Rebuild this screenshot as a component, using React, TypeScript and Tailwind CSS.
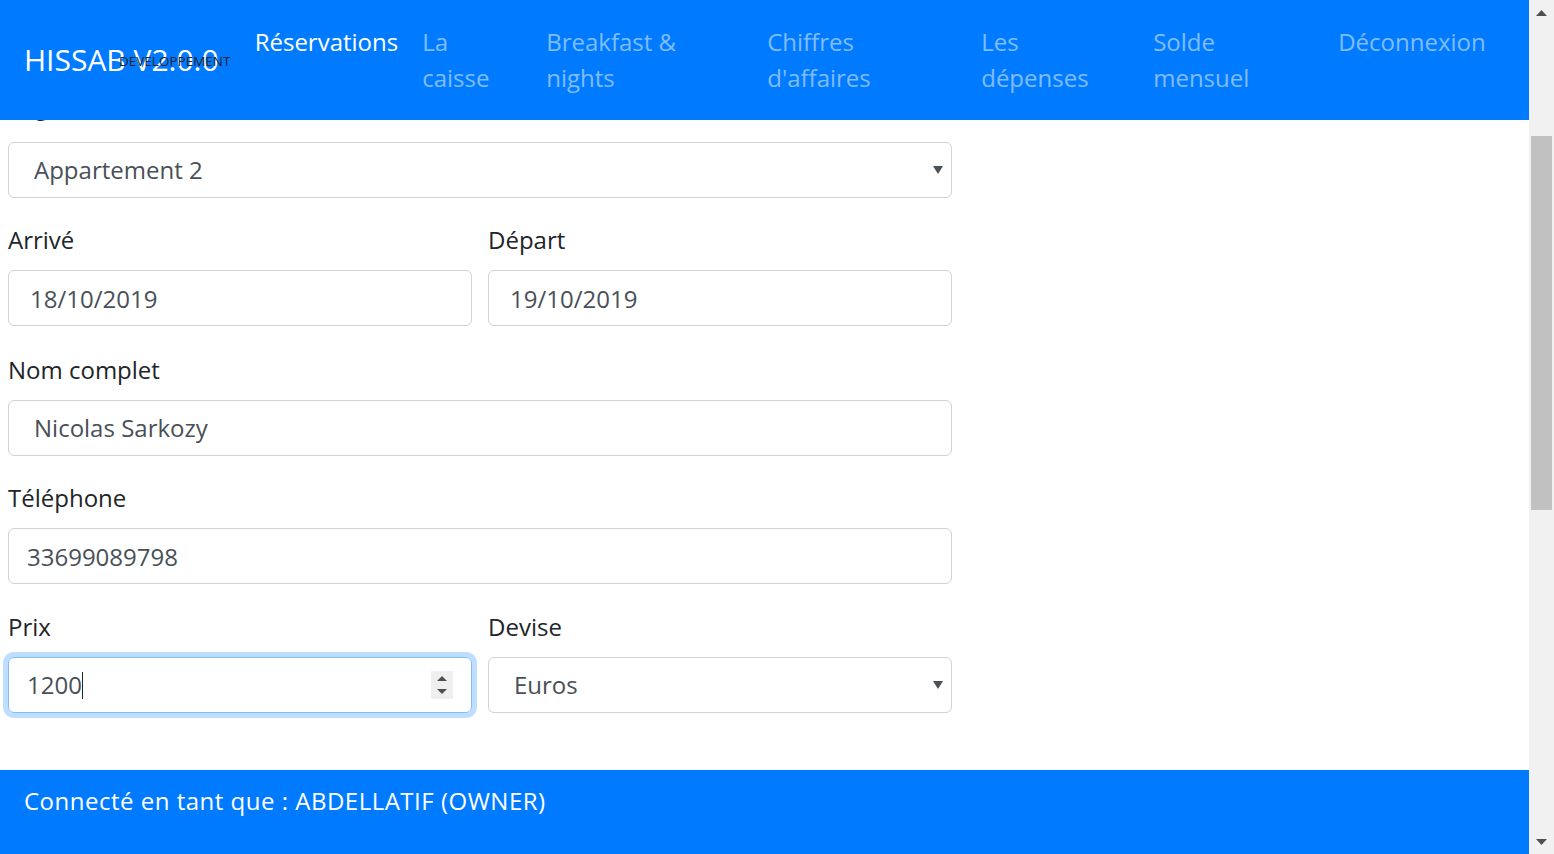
import React from 'react';

const navItems = [
  { label: ['Réservations'], width: '', active: true },
  { label: ['La', 'caisse'], width: 'w-[100px]' },
  { label: ['Breakfast &', 'nights'], width: 'w-[197px]' },
  { label: ['Chiffres', "d'affaires"], width: 'w-[190px]' },
  { label: ['Les', 'dépenses'], width: 'w-[148px]' },
  { label: ['Solde', 'mensuel'], width: 'w-[161px]' },
  { label: ['Déconnexion'], width: '' },
];

const inputCls =
  'w-full h-[56px] border border-[#ced4da] rounded-[6px] bg-white text-[24px] leading-[36px] text-[#495057] outline-none';

function Label({ children, className = '' }: { children: React.ReactNode; className?: string }) {
  return <label className={`block text-[24px] leading-[36px] mb-3 text-[#212529] ${className}`}>{children}</label>;
}

function Caret() {
  return (
    <svg width="10" height="8" viewBox="0 0 10 8" className="absolute right-[9px] top-1/2 -translate-y-1/2">
      <path d="M0 0h10L5 8z" fill="#495057" />
    </svg>
  );
}

function SelectBox({ value }: { value: string }) {
  return (
    <div className="relative">
      <select className={`${inputCls} appearance-none pl-[25px]`} defaultValue={value}>
        <option>{value}</option>
      </select>
      <Caret />
    </div>
  );
}

function ScrollArrow({ up }: { up?: boolean }) {
  return (
    <div className="h-[25px] flex items-center justify-center">
      <svg width="11" height="6" viewBox="0 0 11 6">
        <path d={up ? 'M0 6h11L5.5 0z' : 'M0 0h11L5.5 6z'} fill="#505050" />
      </svg>
    </div>
  );
}

export default function App() {
  return (
    <div className="flex w-[1554px] h-[854px] overflow-hidden bg-white" style={{ fontFamily: '"Open Sans", "Liberation Sans", sans-serif' }}>
      <div className="flex-1 flex flex-col min-w-0">
        {/* Navbar */}
        <header className="h-[120px] shrink-0 bg-[#007bff] flex items-center px-6 z-10">
          <div className="relative mr-6 text-[30px] leading-[45px] text-white whitespace-nowrap -mt-[2px]">
            HISSAB V2.0.0
            <span className="absolute left-[95px] top-[14px] text-[13.5px] leading-[20px] text-[#212529]">DEVELOPPEMENT</span>
          </div>
          <ul className="flex self-start pt-3">
            {navItems.map((item) => (
              <li key={item.label.join(' ')} className="px-3 py-3">
                <a
                  className={`block text-[24px] leading-[36px] ${item.width} ${item.active ? 'text-white' : 'text-white/50'}`}
                >
                  {item.label.map((l, i) => (
                    <React.Fragment key={l}>
                      {i > 0 && <br />}
                      {l}
                    </React.Fragment>
                  ))}
                </a>
              </li>
            ))}
          </ul>
        </header>

        {/* Form */}
        <div className="flex-1 overflow-hidden">
          <form className="w-[944px] ml-2 -mt-[26px]">
            <div className="mb-6">
              <Label className="-translate-y-[6px]">Logement</Label>
              <SelectBox value="Appartement 2" />
            </div>
            <div className="flex gap-4 mb-[25.5px]">
              <div className="flex-1">
                <Label>Arrivé</Label>
                <input className={`${inputCls} pl-[21px]`} defaultValue="18/10/2019" />
              </div>
              <div className="flex-1">
                <Label>Départ</Label>
                <input className={`${inputCls} pl-[21px]`} defaultValue="19/10/2019" />
              </div>
            </div>
            <div className="mb-[24.75px]">
              <Label>Nom complet</Label>
              <input className={`${inputCls} pl-[25px]`} defaultValue="Nicolas Sarkozy" />
            </div>
            <div className="mb-[25px]">
              <Label>Téléphone</Label>
              <input className={`${inputCls} px-[18px]`} defaultValue="33699089798" />
            </div>
            <div className="flex gap-4 mb-6">
              <div className="flex-1">
                <Label>Prix</Label>
                <div className="relative h-[56px] border border-[#80bdff] rounded-[6px] shadow-[0_0_0_5px_rgba(0,123,255,0.25)] flex items-center pl-[18px] text-[24px] text-[#495057]">
                  <span>1200</span>
                  <span className="w-px h-[27px] bg-[#212529]" />
                  <div className="absolute right-[18px] top-[13px] w-[22px] h-[28px] bg-[#efefef] flex flex-col items-center justify-center gap-[8px]">
                    <svg width="10" height="5" viewBox="0 0 10 5"><path d="M0 5h10L5 0z" fill="#505050" /></svg>
                    <svg width="10" height="5" viewBox="0 0 10 5"><path d="M0 0h10L5 5z" fill="#505050" /></svg>
                  </div>
                </div>
              </div>
              <div className="flex-1">
                <Label>Devise</Label>
                <SelectBox value="Euros" />
              </div>
            </div>
          </form>
        </div>

        {/* Footer */}
        <footer className="h-[84px] shrink-0 bg-[#007bff] px-6 pt-[13px] text-[24px] leading-[36px] tracking-[0.5px] text-white">
          Connecté en tant que : ABDELLATIF (OWNER)
        </footer>
      </div>

      {/* Scrollbar */}
      <div className="w-[25px] shrink-0 bg-[#f1f1f1] flex flex-col">
        <ScrollArrow up />
        <div className="flex-1 pt-[111px] px-[2px]">
          <div className="h-[374px] bg-[#c1c1c1]" />
        </div>
        <ScrollArrow />
      </div>
    </div>
  );
}
